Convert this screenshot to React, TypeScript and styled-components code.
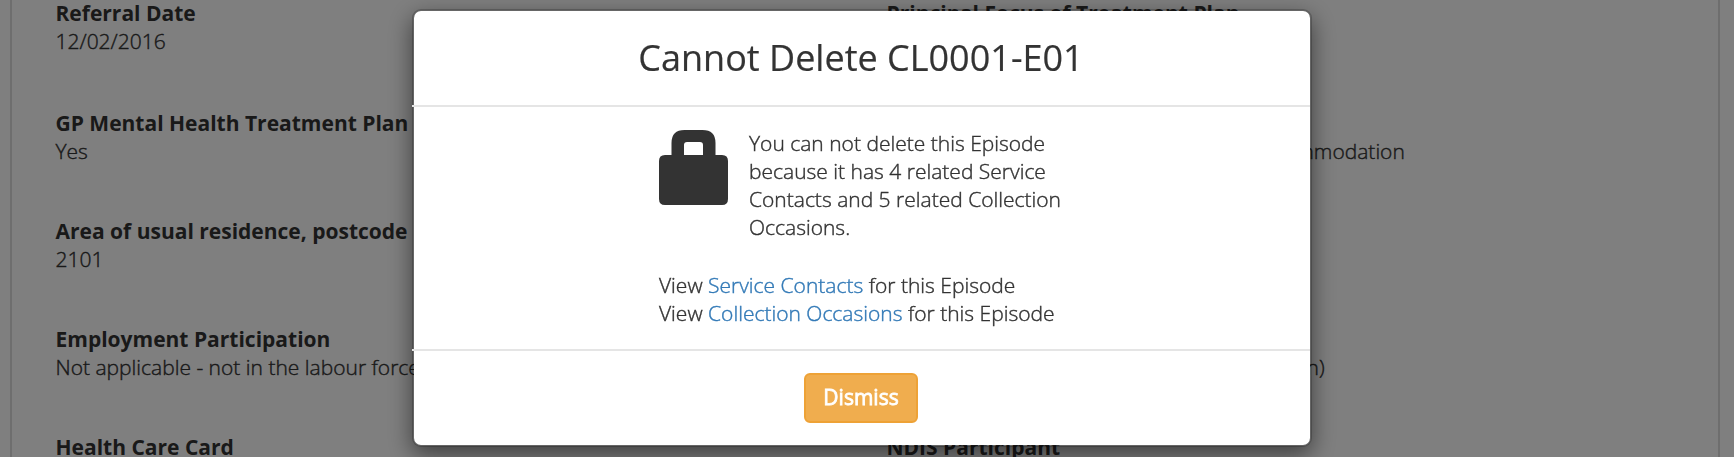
import React from "react";
import styled, { createGlobalStyle } from "styled-components";

const GlobalStyle = createGlobalStyle`
  * { box-sizing: border-box; }
  body {
    margin: 0;
    background: #fff;
    color: #333;
    font: 300 21px/28px "Open Sans", sans-serif;
    -webkit-text-stroke: 0.4px;
    overflow: hidden;
  }
`;

const Page = styled.div`
  height: 457px;
  padding: 0 14px 0 10px;
  overflow: hidden;
`;

const Panel = styled.main`
  display: grid;
  grid-template-columns: 831px 1fr;
  grid-template-rows: 110px;
  grid-auto-rows: 108px;
  height: 620px;
  margin-top: -1px;
  padding-left: 43.5px;
  border: solid #ddd;
  border-width: 0 2px;
`;

const Field = styled.dl`
  margin: 0;
`;

const Label = styled.dt`
  height: 28px;
  font-weight: 700;
  -webkit-text-stroke: 0;
  white-space: nowrap;
`;

const Value = styled.dd`
  margin: 0;
  white-space: nowrap;
`;

const Backdrop = styled.div`
  position: fixed;
  inset: 0;
  display: flex;
  justify-content: center;
  align-items: flex-start;
  padding: 9px 10px 0 0;
  background: rgba(0, 0, 0, 0.5);
`;

const Dialog = styled.section`
  width: 900px;
  height: 438px;
  background: #fff;
  background-clip: padding-box;
  border: 2px solid rgba(0, 0, 0, 0.2);
  border-radius: 9px;
  box-shadow: 0 8px 23px rgba(0, 0, 0, 0.5);
`;

const Header = styled.header`
  height: 96px;
  margin-left: -2px;
  padding-top: 22px;
  border-bottom: 2px solid #e5e5e5;
  text-align: center;
`;

const Title = styled.h3`
  margin: 0;
  font-size: 36px;
  font-weight: 400;
  line-height: 50px;
  -webkit-text-stroke: 0.2px;
`;

const Body = styled.div`
  width: 406px;
  height: 242px;
  margin: 0 auto;
  padding-top: 22px;
`;

const Notice = styled.div`
  display: flex;
  gap: 21px;
  height: 142px;
`;

const LockIcon = styled.svg`
  flex: none;
  width: 69px;
  height: 75px;
  margin-top: 1px;
`;

const Message = styled.p`
  margin: 0;
`;

const Link = styled.a`
  color: #337ab7;
  text-decoration: none;
`;

const Footer = styled.footer`
  display: flex;
  justify-content: center;
  margin-left: -2px;
  padding-top: 22px;
  border-top: 2px solid #e5e5e5;
`;

const DismissButton = styled.button`
  width: 114px;
  height: 50px;
  padding: 0 0 2px;
  color: #fff;
  background: #f0ad4e;
  border: 2px solid #eea236;
  border-radius: 6px;
  font: 400 21px/28px "Open Sans", sans-serif;
  -webkit-text-stroke: 0.8px #fff;
`;

const fields = [
  { label: "Referral Date", value: "12/02/2016" },
  { label: "Principal Focus of Treatment Plan" },
  { label: "GP Mental Health Treatment Plan", value: "Yes" },
  { label: "Homelessness", value: "Sleeping rough or in non-conventional accommodation" },
  { label: "Area of usual residence, postcode", value: "2101" },
  { label: "Marital Status" },
  { label: "Employment Participation", value: "Not applicable - not in the labour force" },
  { label: "Source of Cash Income", value: "Other pension or benefit (not superannuation)" },
  { label: "Health Care Card" },
  { label: "NDIS Participant" },
];

export default function App() {
  return (
    <>
      <GlobalStyle />
      <Page>
        <Panel>
          {fields.map(({ label, value }) => (
            <Field key={label}>
              <Label>{label}</Label>
              {value && <Value>{value}</Value>}
            </Field>
          ))}
        </Panel>
      </Page>
      <Backdrop>
        <Dialog role="dialog" aria-modal="true">
          <Header>
            <Title>Cannot Delete CL0001-E01</Title>
          </Header>
          <Body>
            <Notice>
              <LockIcon viewBox="0 0 69 75" fill="#333" aria-hidden="true">
                <path
                  fillRule="evenodd"
                  d="M6 25H12.5V13Q12.5 0 25.5 0H43.5Q56.5 0 56.5 13V25H63Q69 25 69 31V69Q69 75 63 75H6Q0 75 0 69V31Q0 25 6 25ZM25 25H44V15Q44 12 41 12H28Q25 12 25 15Z"
                />
              </LockIcon>
              <Message>
                You can not delete this Episode because it has 4 related Service Contacts and 5
                related Collection Occasions.
              </Message>
            </Notice>
            <div>
              View <Link>Service Contacts</Link> for this Episode
            </div>
            <div>
              View <Link>Collection Occasions</Link> for this Episode
            </div>
          </Body>
          <Footer>
            <DismissButton type="button">Dismiss</DismissButton>
          </Footer>
        </Dialog>
      </Backdrop>
    </>
  );
}
